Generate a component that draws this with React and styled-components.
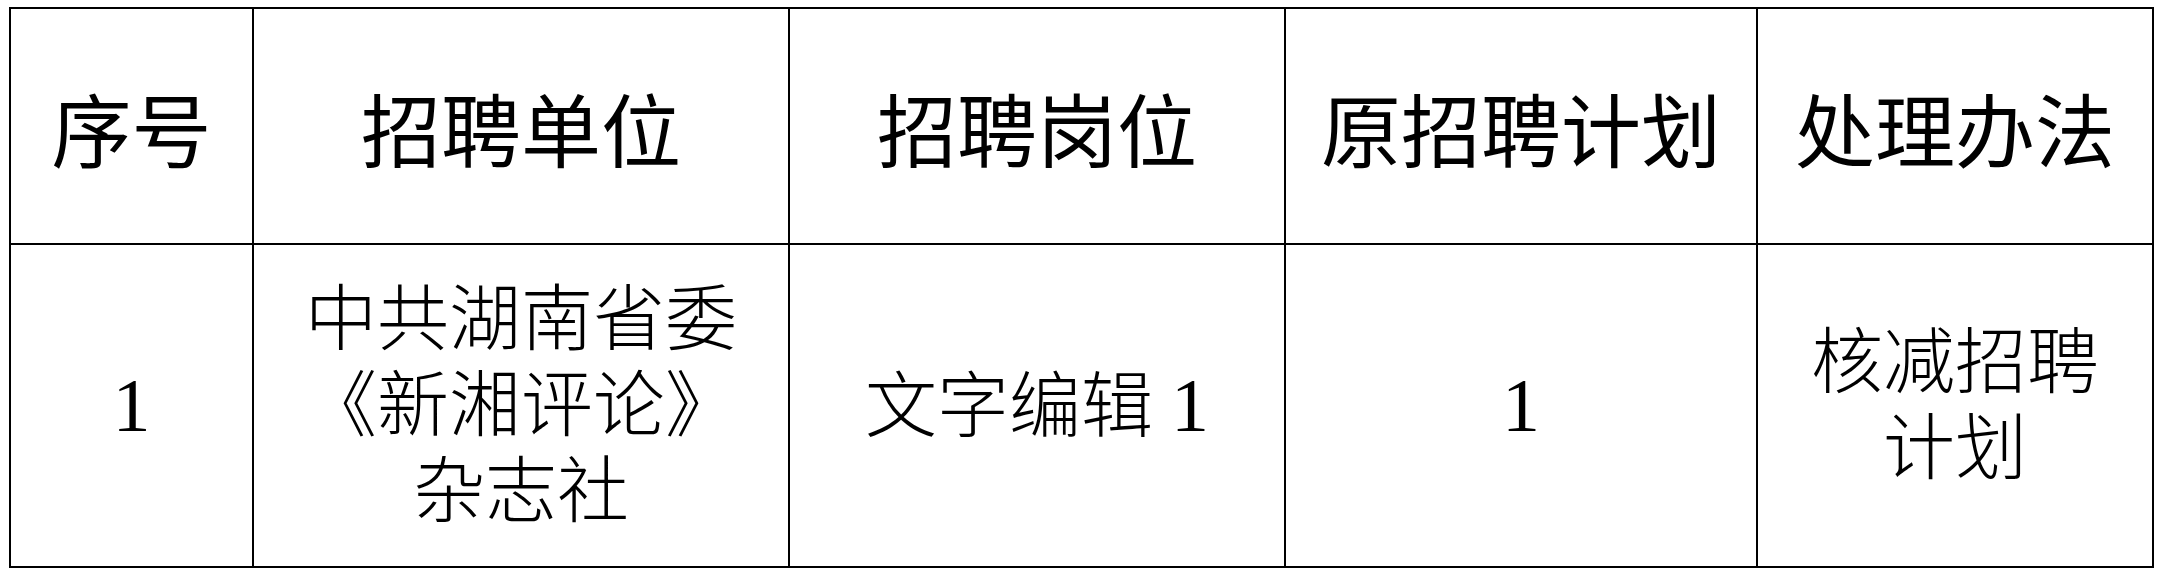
import React from 'react'
import styled, { createGlobalStyle } from 'styled-components'

const GlobalStyle = createGlobalStyle`
  html, body {
    margin:0;
    padding:0;
    background:#fff;
  }
  body {
    padding:7px 0 0 9px;
  }
`

const Table = styled.table`
  width:2145px;
  table-layout:fixed;
  border-collapse:collapse;
  border:2px solid #000;
  color:#000;
`
const HeadRow = styled.tr`
  height:236px;
`
const BodyRow = styled.tr`
  height:323px;
`
const HeadCell = styled.th`
  border:2px solid #000;
  padding:0;
  text-align:center;
  vertical-align:middle;
  font-family:"Noto Sans CJK SC", sans-serif;
  font-size:80px;
  font-weight:400;
  line-height:1;
  white-space:nowrap;
`
const Cell = styled.td`
  border:2px solid #000;
  padding:0 18px;
  text-align:center;
  vertical-align:middle;
  font-family:"Liberation Serif", "Noto Sans CJK SC", serif;
  font-size:72px;
  font-weight:300;
  line-height:86px;
`
const Num = styled.span`
  font-family:"Liberation Serif", serif;
  font-size:76px;
  font-weight:400;
`

const columns = [
  { key: 'no', title: '序号', width: 243 },
  { key: 'unit', title: '招聘单位', width: 536 },
  { key: 'post', title: '招聘岗位', width: 496 },
  { key: 'plan', title: '原招聘计划', width: 472 },
  { key: 'way', title: '处理办法', width: 396 },
]

const rows = [
  {
    no: '1',
    unit: ['中共湖南省委', '《新湘评论》', '杂志社'],
    post: '文字编辑',
    postNum: '1',
    plan: '1',
    way: ['核减招聘', '计划'],
  },
]

const Lines = ({ list }) => list.map((t, i) => (
  <React.Fragment key={i}>
    {i > 0 ? <br /> : null}
    {t}
  </React.Fragment>
))

export default function App() {
  return (
    <>
      <GlobalStyle />
      <Table>
        <colgroup>
          {columns.map(c => <col key={c.key} style={{ width: c.width }} />)}
        </colgroup>
        <thead>
          <HeadRow>
            {columns.map(c => <HeadCell key={c.key}>{c.title}</HeadCell>)}
          </HeadRow>
        </thead>
        <tbody>
          {rows.map(r => (
            <BodyRow key={r.no}>
              <Cell><Num>{r.no}</Num></Cell>
              <Cell><Lines list={r.unit} /></Cell>
              <Cell>{r.post} <Num>{r.postNum}</Num></Cell>
              <Cell><Num>{r.plan}</Num></Cell>
              <Cell><Lines list={r.way} /></Cell>
            </BodyRow>
          ))}
        </tbody>
      </Table>
    </>
  )
}
